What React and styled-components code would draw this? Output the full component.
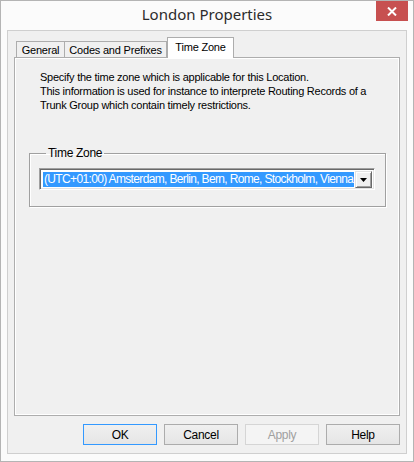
import styled, { createGlobalStyle } from "styled-components";

const Global = createGlobalStyle`
    html, body {
        margin: 0;
        padding: 0;
        background: #ffffff;
    }
    * {
        box-sizing: border-box;
    }
`;

const Ventana = styled.div`
    width: 414px;
    height: 462px;
    border: 1px solid #b4b4b4;
    background: #fbfbfb;
    display: flex;
    flex-direction: column;
    padding: 0 6px 7px 6px;
    font-family: "Liberation Sans", Arial, sans-serif;
    font-size: 11px;
    color: #000;
`;

const BarraTitulo = styled.div`
    height: 29px;
    display: grid;
    grid-template-columns: 1fr auto 1fr;
    align-items: start;
`;

const Titulo = styled.div`
    grid-column: 2;
    font-family: "Noto Sans", "Open Sans", sans-serif;
    font-size: 15px;
    line-height: 29px;
    color: #2b2b2b;
    margin-top: -1px;
`;

const BotonCerrar = styled.div`
    grid-column: 3;
    justify-self: end;
    width: 32px;
    height: 20px;
    margin-right: -1px;
    background: #c75050;
    display: flex;
    align-items: center;
    justify-content: center;
`;

const Cliente = styled.div`
    flex: 1;
    border: 1px solid #cfcfcf;
    background: #f0f0f0;
    display: flex;
    flex-direction: column;
    padding: 7px 6px 7px 6px;
`;

const FilaPestanas = styled.div`
    display: flex;
    align-items: flex-end;
    height: 20px;
    padding-left: 2px;
    position: relative;
    z-index: 1;
`;

const Pestana = styled.div`
    width: ${({ $ancho }) => $ancho}px;
    height: ${({ $activa }) => ($activa ? "21px" : "17px")};
    border: 1px solid #adadad;
    border-bottom: ${({ $activa }) => ($activa ? "none" : "1px solid #adadad")};
    margin-left: ${({ $primera, $activa }) => ($primera ? "0" : $activa ? "0" : "-1px")};
    background: ${({ $activa }) => ($activa ? "#ffffff" : "#f0f0f0")};
    display: flex;
    align-items: center;
    justify-content: center;
    line-height: 14px;
    letter-spacing: -0.2px;
    padding-top: ${({ $activa }) => ($activa ? "0" : "1px")};
    padding-bottom: ${({ $activa }) => ($activa ? "3px" : "0")};
    white-space: nowrap;
`;

const Panel = styled.div`
    height: 359px;
    margin-top: -1px;
    border: 1px solid #adadad;
    box-shadow: inset 1px 1px 0 #ffffff, inset -1px -1px 0 #ffffff;
    background: #f0f0f0;
    padding: 12px 10px 0 25px;
    display: flex;
    flex-direction: column;
`;

const Descripcion = styled.p`
    margin: 0;
    line-height: 14px;
    letter-spacing: -0.25px;
`;

const Grupo = styled.fieldset`
    margin: 34px 0 0 -11px;
    padding: 10px 10px 15px 9px;
    width: 357px;
    height: 61px;
    border: 1px solid #a0a0a0;
    border-radius: 0;
    box-shadow: 1px 1px 0 #ffffff, inset 1px 1px 0 #ffffff;
`;

const Leyenda = styled.legend`
    padding: 0 2px;
    margin-left: 7px;
    font-size: 12px;
    line-height: 14px;
    letter-spacing: -0.3px;
`;

const Combo = styled.div`
    width: 336px;
    height: 22px;
    margin-top: -2px;
    background: #ffffff;
    border-top: 1px solid #a0a0a0;
    border-left: 1px solid #a0a0a0;
    border-right: 1px solid #ffffff;
    border-bottom: 1px solid #ffffff;
    box-shadow: inset 1px 1px 0 #696969, inset -1px -1px 0 #e3e3e3;
    padding: 3px 2px 2px 3px;
    display: flex;
    align-items: stretch;
`;

const ComboTexto = styled.div`
    flex: 1;
    min-width: 0;
    background: #3399ff;
    color: #ffffff;
    font-size: 12px;
    line-height: 15px;
    padding-left: 1px;
    white-space: nowrap;
    letter-spacing: -0.65px;
`;

const ComboBoton = styled.div`
    width: 17px;
    flex-shrink: 0;
    margin: -1px 0 -1px 1px;
    background: #f0f0f0;
    border-top: 1px solid #e3e3e3;
    border-left: 1px solid #e3e3e3;
    border-right: 1px solid #696969;
    border-bottom: 1px solid #696969;
    box-shadow: inset 1px 1px 0 #ffffff, inset -1px -1px 0 #a0a0a0;
    display: flex;
    align-items: center;
    justify-content: center;
`;

const FilaBotones = styled.div`
    display: flex;
    justify-content: flex-end;
    gap: 7px;
    margin-top: 8px;
`;

const Boton = styled.button`
    width: 74px;
    height: 21px;
    padding: 0;
    font-family: "Liberation Sans", Arial, sans-serif;
    font-size: 12px;
    letter-spacing: -0.3px;
    color: ${({ $desactivado }) => ($desactivado ? "#a0a0a0" : "#000000")};
    border: 1px solid ${({ $defecto, $desactivado }) =>
        $defecto ? "#3399ff" : $desactivado ? "#d5d5d5" : "#acacac"};
    background: ${({ $desactivado }) =>
        $desactivado ? "#f4f4f4" : "linear-gradient(#f0f0f0, #e5e5e5)"};
    border-radius: 0;
`;

export default function App() {
    return (
        <>
            <Global />
            <Ventana>
                <BarraTitulo>
                    <Titulo>London Properties</Titulo>
                    <BotonCerrar>
                        <svg width="10" height="9" viewBox="0 0 10 9">
                            <path d="M1 0.5 L9 8.5 M9 0.5 L1 8.5" stroke="#ffffff" strokeWidth="2" />
                        </svg>
                    </BotonCerrar>
                </BarraTitulo>
                <Cliente>
                    <FilaPestanas>
                        <Pestana $primera $ancho={49}>General</Pestana>
                        <Pestana $ancho={103}>Codes and Prefixes</Pestana>
                        <Pestana $activa $ancho={67}>Time Zone</Pestana>
                    </FilaPestanas>
                    <Panel>
                        <Descripcion>
                            Specify the time zone which is applicable for this Location.
                            <br />
                            This information is used for instance to interprete Routing Records of a
                            <br />
                            Trunk Group which contain timely restrictions.
                        </Descripcion>
                        <Grupo>
                            <Leyenda>Time Zone</Leyenda>
                            <Combo>
                                <ComboTexto>(UTC+01:00) Amsterdam, Berlin, Bern, Rome, Stockholm, Vienna</ComboTexto>
                                <ComboBoton>
                                    <svg width="7" height="4" viewBox="0 0 7 4">
                                        <path d="M0 0 H7 L3.5 4 Z" fill="#000000" />
                                    </svg>
                                </ComboBoton>
                            </Combo>
                        </Grupo>
                    </Panel>
                    <FilaBotones>
                        <Boton $defecto>OK</Boton>
                        <Boton>Cancel</Boton>
                        <Boton $desactivado>Apply</Boton>
                        <Boton>Help</Boton>
                    </FilaBotones>
                </Cliente>
            </Ventana>
        </>
    );
}
